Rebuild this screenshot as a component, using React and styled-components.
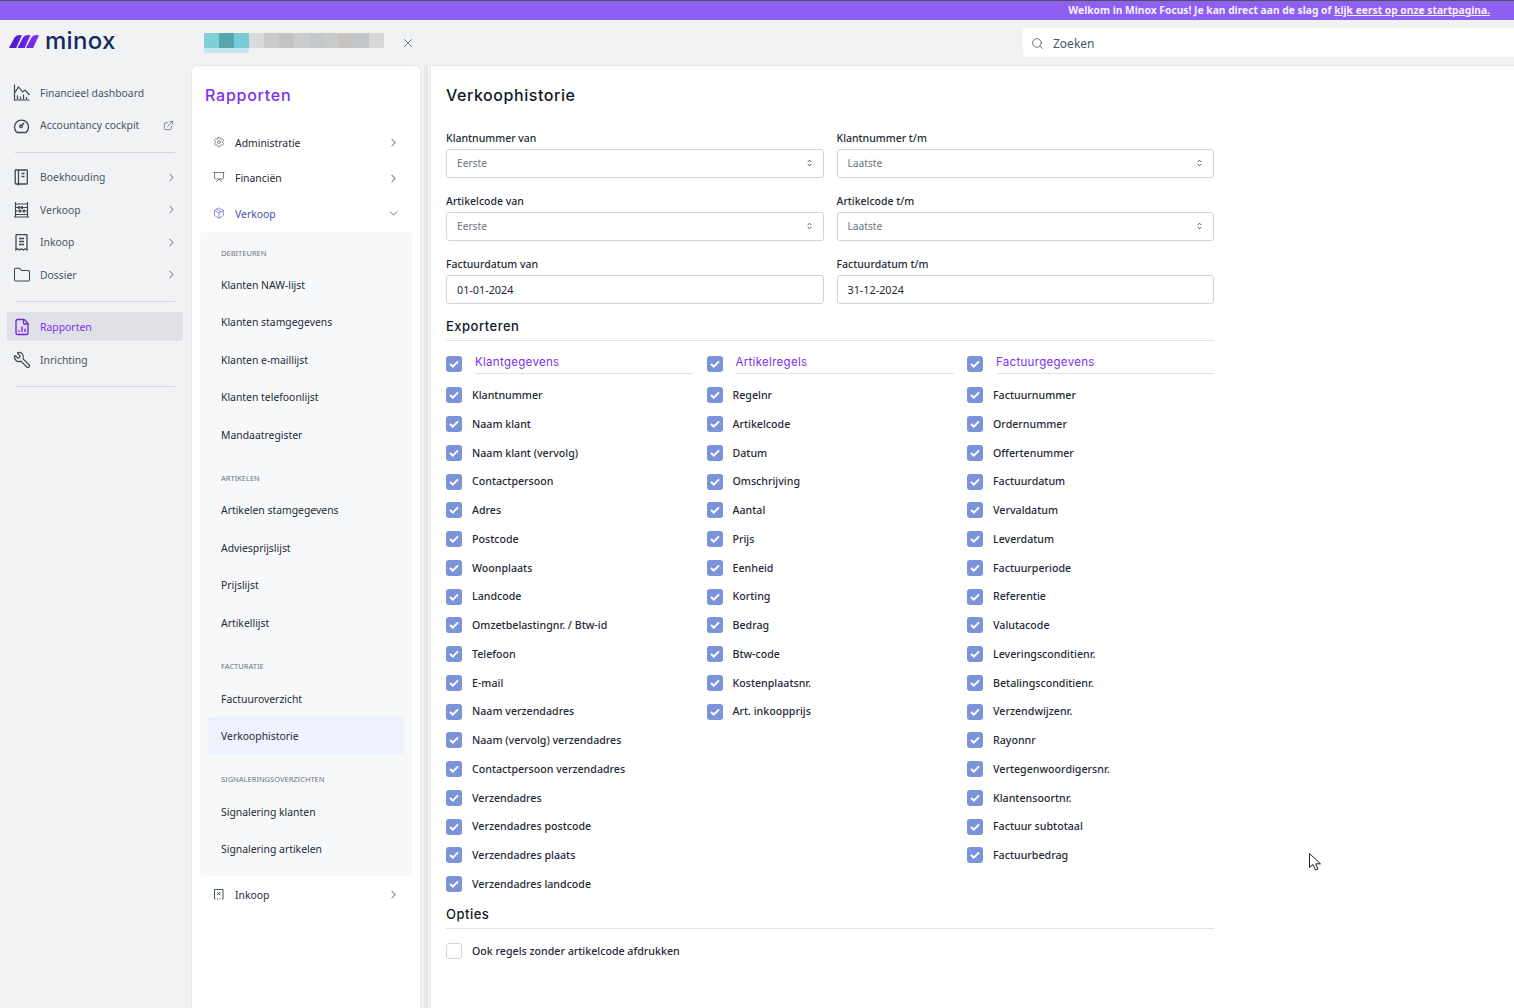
import React from "react";
import styled, { createGlobalStyle } from "styled-components";
import {
  ChevronDown,
  ChevronRight,
  ExternalLink,
  FileChartColumn,
  Folder,
  Package,
  Presentation,
  Search,
  Settings,
  Wrench,
  X,
} from "lucide-react";

const GlobalStyle = createGlobalStyle`
  html, body { margin: 0; padding: 0; background: #f1f2f4; }
  body { font-family: "Noto Sans", "Liberation Sans", sans-serif; font-size: 10.4px; color: #1f2937; }
  * { box-sizing: border-box; }
`;

const Page = styled.div`
  position: relative;
  display: flex;
  flex-direction: column;
  width: 1514px;
  height: 1008px;
  overflow: hidden;
`;

const Banner = styled.div`
  height: 20px;
  flex: none;
  padding-right: 24px;
  background: #8f5ff3;
  border-top: 1px solid #4f4f55;
  color: #f5f0fe;
  font-size: 10.28px;
  font-weight: 700;
  line-height: 18px;
  text-align: right;
  a { color: inherit; text-decoration: underline; }
`;

const Header = styled.header`
  display: flex;
  align-items: center;
  height: 45px;
  flex: none;
`;

const LogoArea = styled.div`
  display: flex;
  align-items: center;
  width: 204px;
  margin-bottom: 4px;
  padding-left: 9px;
  gap: 6px;
`;

const LogoText = styled.span`
  font-family: "Inter", sans-serif;
  font-size: 24px;
  font-weight: 500;
  line-height: 24px;
  letter-spacing: 0.3px;
  color: #142a5c;
`;

const Tenant = styled.div`
  display: flex;
  align-items: flex-start;
  height: 20px;
`;

const Pixel = styled.div`
  width: 15px;
  height: ${(p) => (p.$tall ? 20 : 15)}px;
  background: ${(p) =>
    p.$tall ? `linear-gradient(${p.$c} 15px, #c3ebef 15px)` : p.$c};
`;

const CloseBtn = styled.div`
  display: flex;
  margin-left: 17px;
  color: #4b5563;
`;

const SearchBox = styled.div`
  display: flex;
  align-items: center;
  gap: 9px;
  width: 491px;
  height: 29px;
  margin-left: auto;
  padding: 1px 0 0 8px;
  background: #fff;
  border-radius: 3px 0 0 3px;
  color: #4b5563;
  font-size: 12px;
`;

const Body = styled.div`
  display: flex;
  flex: 1;
  min-height: 0;
`;

const Sidebar = styled.nav`
  width: 191px;
  flex: none;
  padding: 11.6px 8px 0 7px;
`;

const SideItem = styled.div`
  display: flex;
  align-items: center;
  height: ${(p) => (p.$active ? 29 : 32.6)}px;
  margin: ${(p) => (p.$active ? "10.1px 0 2px" : "0")};
  padding: 0 5px 0 6px;
  border-radius: 3px;
  background: ${(p) => (p.$active ? "#dfe1e6" : "transparent")};
  color: ${(p) => (p.$active ? "#7c2ff0" : "#4b5563")};
`;

const SideIcon = styled.span`
  display: flex;
  width: 27px;
  flex: none;
  color: ${(p) => (p.$active ? "#6d28d9" : "#3f4753")};
`;

const SideLabel = styled.span`
  flex: 1;
`;

const ExternalMark = styled.span`
  display: flex;
  margin-right: 4px;
`;

const FlipX = styled.span`
  display: flex;
  transform: scaleX(-1);
`;

const SideRule = styled.hr`
  height: 1px;
  margin: 10px 8px 8px;
  border: 0;
  background: #d4d6db;
`;

const Panel = styled.aside`
  width: 230px;
  flex: none;
  padding: 0 8px;
  background: #fff;
  border: 1px solid #e5e7eb;
  border-bottom: 0;
  border-radius: 6px 6px 0 0;
`;

const PanelTitle = styled.h2`
  margin: 19px 0 20px 5px;
  font-family: "Inter", sans-serif;
  font-size: 16px;
  font-weight: 500;
  line-height: 20px;
  letter-spacing: 0.75px;
  color: #7c2ff0;
`;

const PanelItem = styled.div`
  display: flex;
  align-items: center;
  height: 35.5px;
  padding: 0 12px 0 13px;
  color: ${(p) => (p.$open ? "#3f51a8" : "#1f2937")};
`;

const PanelIcon = styled.span`
  display: flex;
  width: 22px;
  flex: none;
  margin-top: -2px;
  color: ${(p) => (p.$open ? "#5b6cc0" : "#4b5563")};
`;

const PanelLabel = styled.span`
  flex: 1;
`;

const SubPanel = styled.div`
  margin-bottom: 1.5px;
  padding: 8px;
  background: #f7f8fa;
  border-radius: 4px;
`;

const SubHeader = styled.div`
  height: 26.5px;
  margin-top: ${(p) => (p.$first ? 0 : 12)}px;
  padding-left: 13px;
  color: #6b7280;
  font-size: 7.5px;
  line-height: 27.5px;
  text-transform: uppercase;
`;

const SubItem = styled.div`
  height: 37.4px;
  padding-left: 13px;
  border-radius: 2px;
  background: ${(p) => (p.$active ? "#eef2fd" : "transparent")};
  color: #1f2937;
  line-height: 39px;
`;

const Strip = styled.div`
  width: 9px;
  flex: none;
  background: linear-gradient(90deg, #f1f2f4 3px, #e5e7eb 3px, #e5e7eb 7px, #f1f2f4 7px);
`;

const Main = styled.main`
  flex: 1;
  padding: 0 0 0 15px;
  background: #fff;
  border-top: 1px solid #e5e7eb;
  border-left: 1px solid #e5e7eb;
`;

const Form = styled.div`
  width: 768px;
`;

const Title = styled.h1`
  margin: 19px 0 24.7px;
  font-family: "Inter", sans-serif;
  font-size: 16px;
  font-weight: 500;
  line-height: 20px;
  letter-spacing: 0.55px;
  color: #111827;
`;

const Fields = styled.div`
  display: grid;
  grid-template-columns: 1fr 1fr;
  column-gap: 13px;
  row-gap: 15px;
`;

const Field = styled.div`
  display: flex;
  flex-direction: column;
  gap: 3px;
`;

const FieldLabel = styled.label`
  font-size: 10.5px;
  line-height: 16px;
  font-weight: 500;
  color: #1f2937;
`;

const Input = styled.div`
  display: flex;
  align-items: center;
  justify-content: space-between;
  height: 29px;
  padding: 0 11px 0 10px;
  background: #fff;
  border: 1px solid #d1d5db;
  border-radius: 3px;
  color: ${(p) => (p.$placeholder ? "#6b7280" : "#1f2937")};
  font-size: ${(p) => (p.$placeholder ? 10.2 : 10.8)}px;
`;

const SectionTitle = styled.h3`
  height: 24px;
  margin: ${(p) => p.$mt}px 0 0;
  border-bottom: 1px solid #e0e2e8;
  font-family: "Inter", sans-serif;
  font-size: 13px;
  font-weight: 450;
  line-height: 18px;
  letter-spacing: 0.5px;
  color: #111827;
`;

const Columns = styled.div`
  display: grid;
  grid-template-columns: repeat(3, 1fr);
  column-gap: 13.5px;
  margin-top: 11px;
`;

const ColumnHead = styled.div`
  display: flex;
  align-items: center;
  height: 22px;
  margin-bottom: 7px;
  & > span:first-child { margin-top: 2px; }
`;

const ColumnTitle = styled.div`
  flex: 1;
  height: 22px;
  margin-left: 13px;
  border-bottom: 1px solid #e0e2e8;
  font-family: "Inter", sans-serif;
  font-size: 11.5px;
  line-height: 20px;
  letter-spacing: 0.3px;
  color: #7c2ff0;
`;

const Row = styled.div`
  display: flex;
  align-items: center;
  gap: 10px;
  height: 28.75px;
  font-size: 10.65px;
  font-weight: 500;
  color: #1f2937;
`;

const RowText = styled.span`
  margin-bottom: 0.5px;
`;

const OptionRow = styled(Row)`
  margin-top: 7px;
`;

const Box = styled.span`
  display: flex;
  align-items: center;
  justify-content: center;
  width: 16px;
  height: 16px;
  flex: none;
  background: ${(p) => (p.$checked ? "#7b93d8" : "#fff")};
  border: ${(p) => (p.$checked ? "0" : "1px solid #d1d5db")};
  border-radius: 3px;
`;

const Cursor = styled.svg`
  position: absolute;
  left: 1308px;
  top: 852px;
`;

const Check = ({ checked = true }) => (
  <Box $checked={checked}>
    {checked && (
      <svg width="10" height="8" viewBox="0 0 10 8" fill="none">
        <path d="M1 4l2.800 2.600L9 1.400" stroke="#fff" strokeWidth="2" />
      </svg>
    )}
  </Box>
);

const DashboardIcon = () => (
  <svg width="17" height="17" viewBox="0 0 17 17" fill="none" stroke="currentColor" strokeWidth="1.2">
    <path d="M1.500 0.500v15.500H16.500" />
    <path d="M1.500 9l4-6 4 5 2.500-2 4.500 5" />
    <path d="M4.500 15.500v-4M7.500 15.500v-3M10.500 15.500v-5M13.500 15.500v-2.500" />
  </svg>
);

const GaugeIcon = () => (
  <svg width="17" height="17" viewBox="0 0 17 17" fill="none" stroke="currentColor" strokeWidth="1.4">
    <path d="M4 15.500h9a7 7 0 1 0-9 0z" />
    <circle cx="8" cy="9.300" r="1.300" />
    <path d="M9 8.300l2-2.300" />
  </svg>
);

const BookIcon = () => (
  <svg width="17" height="17" viewBox="0 0 17 17" fill="none" stroke="currentColor" strokeWidth="1.300">
    <path d="M3 1h10.500a.8.8 0 0 1 .8.800v12.400a.8.8 0 0 1-.8.800H3a.8.8 0 0 1-.8-.8V1.800a.8.8 0 0 1 .8-.8z" />
    <path d="M5.500 1v15.500M8.500 4.500h3M8.500 7.500h3" />
  </svg>
);

const AbacusIcon = () => (
  <svg width="17" height="17" viewBox="0 0 17 17" fill="none" stroke="currentColor" strokeWidth="1.2">
    <path d="M1 16h15M2.500 1v15M14.500 1v15M2.500 3h12M2.500 13.500h12M2.500 6.500h12M2.500 10h12" />
    <path d="M6 5v3M9 5v3M7 8.500v3M11 8.500v3" strokeWidth="1.800" />
  </svg>
);

const ReceiptIcon = () => (
  <svg width="17" height="17" viewBox="0 0 17 17" fill="none" stroke="currentColor" strokeWidth="1.300">
    <path d="M3 1.500a1 1 0 0 1 1-1h9a1 1 0 0 1 1 1V16l-1.800-1.200L10.300 16l-1.800-1.200L6.700 16l-1.900-1.200L3 16z" />
    <path d="M6 4.500h5M6 7.500h5M6 10.500h5" />
  </svg>
);

const VoidReceiptIcon = () => (
  <svg width="12" height="12" viewBox="0 0 12 12" fill="none" stroke="currentColor" strokeWidth="1">
    <path d="M1.500 11V1.500h8.500V11" />
    <path d="M1.500 11h1M4 11h1M6.500 11h1M9 11h1" />
    <path d="M4.200 4l3 3.200M7.200 4l-3 3.200" />
  </svg>
);

const LogoMark = () => (
  <svg width="30" height="14" viewBox="0 0 30 14">
    <defs>
      <linearGradient id="logoGrad" x1="0" y1="0" x2="1" y2="0">
        <stop offset="0" stopColor="#4c12c9" />
        <stop offset="1" stopColor="#8035f2" />
      </linearGradient>
    </defs>
    <path
      fill="url(#logoGrad)"
      d="M0 14L5.500 3.500Q7 1 10 1L13 1.200L7.200 14ZM8.500 14L14 3.500Q15.500 1 18.500 1L21.500 1.200L15.700 14ZM17 14L22.500 3.500Q24 1 27 1L30 1.200L24.200 14Z"
    />
  </svg>
);

const pixels = ["#83cfd8", "#58a6ad", "#76cbd7", "#d9dadc", "#c9cacc", "#c4c3c2", "#cbcccd", "#c5c8cb", "#c9caca", "#c8c3bf", "#c3c6c8", "#d6d7d8"];

const mainNav = [
  [
    { label: "Financieel dashboard", icon: <DashboardIcon /> },
    { label: "Accountancy cockpit", icon: <GaugeIcon />, external: true },
  ],
  [
    { label: "Boekhouding", icon: <BookIcon />, more: true },
    { label: "Verkoop", icon: <AbacusIcon />, more: true },
    { label: "Inkoop", icon: <ReceiptIcon />, more: true },
    { label: "Dossier", icon: <Folder size={18} strokeWidth={1.4} />, more: true },
  ],
  [
    { label: "Rapporten", icon: <FileChartColumn size={18} strokeWidth={1.8} />, active: true },
    { label: "Inrichting", icon: <FlipX><Wrench size={18} strokeWidth={1.6} /></FlipX> },
  ],
];

const groups = [
  { title: "Debiteuren", items: ["Klanten NAW-lijst", "Klanten stamgegevens", "Klanten e-maillijst", "Klanten telefoonlijst", "Mandaatregister"] },
  { title: "Artikelen", items: ["Artikelen stamgegevens", "Adviesprijslijst", "Prijslijst", "Artikellijst"] },
  { title: "Facturatie", items: ["Factuuroverzicht", "Verkoophistorie"] },
  { title: "Signaleringsoverzichten", items: ["Signalering klanten", "Signalering artikelen"] },
];

const fields = [
  { label: "Klantnummer van", value: "Eerste", select: true },
  { label: "Klantnummer t/m", value: "Laatste", select: true },
  { label: "Artikelcode van", value: "Eerste", select: true },
  { label: "Artikelcode t/m", value: "Laatste", select: true },
  { label: "Factuurdatum van", value: "01-01-2024" },
  { label: "Factuurdatum t/m", value: "31-12-2024" },
];

const exportColumns = [
  {
    title: "Klantgegevens",
    rows: ["Klantnummer", "Naam klant", "Naam klant (vervolg)", "Contactpersoon", "Adres", "Postcode", "Woonplaats", "Landcode", "Omzetbelastingnr. / Btw-id", "Telefoon", "E-mail", "Naam verzendadres", "Naam (vervolg) verzendadres", "Contactpersoon verzendadres", "Verzendadres", "Verzendadres postcode", "Verzendadres plaats", "Verzendadres landcode"],
  },
  {
    title: "Artikelregels",
    rows: ["Regelnr", "Artikelcode", "Datum", "Omschrijving", "Aantal", "Prijs", "Eenheid", "Korting", "Bedrag", "Btw-code", "Kostenplaatsnr.", "Art. inkoopprijs"],
  },
  {
    title: "Factuurgegevens",
    rows: ["Factuurnummer", "Ordernummer", "Offertenummer", "Factuurdatum", "Vervaldatum", "Leverdatum", "Factuurperiode", "Referentie", "Valutacode", "Leveringsconditienr.", "Betalingsconditienr.", "Verzendwijzenr.", "Rayonnr", "Vertegenwoordigersnr.", "Klantensoortnr.", "Factuur subtotaal", "Factuurbedrag"],
  },
];

const SelectArrows = () => (
  <svg width="5" height="8" viewBox="0 0 5 8" fill="none" stroke="#4b5563" strokeWidth="1">
    <path d="M0.700 3L2.500 1.200L4.300 3M0.700 5L2.500 6.800L4.300 5" />
  </svg>
);

export default function App() {
  return (
    <Page>
      <GlobalStyle />
      <Banner>
        Welkom in Minox Focus! Je kan direct aan de slag of <a href="#start">kijk eerst op onze startpagina.</a>
      </Banner>
      <Header>
        <LogoArea>
          <LogoMark />
          <LogoText>minox</LogoText>
        </LogoArea>
        <Tenant>
          {pixels.map((c, i) => (
            <Pixel key={i} $c={c} $tall={i < 3} />
          ))}
        </Tenant>
        <CloseBtn>
          <X size={14} strokeWidth={1.4} />
        </CloseBtn>
        <SearchBox>
          <Search size={13} strokeWidth={1.5} />
          Zoeken
        </SearchBox>
      </Header>
      <Body>
        <Sidebar>
          {mainNav.map((section, i) => (
            <React.Fragment key={i}>
              {section.map((item) => (
                <SideItem key={item.label} $active={item.active}>
                  <SideIcon $active={item.active}>{item.icon}</SideIcon>
                  <SideLabel>{item.label}</SideLabel>
                  {item.more && <ChevronRight size={13} strokeWidth={1.6} />}
                  {item.external && (
                    <ExternalMark><ExternalLink size={11} strokeWidth={1.4} /></ExternalMark>
                  )}
                </SideItem>
              ))}
              <SideRule />
            </React.Fragment>
          ))}
        </Sidebar>
        <Panel>
          <PanelTitle>Rapporten</PanelTitle>
          <PanelItem>
            <PanelIcon><Settings size={12} strokeWidth={1.3} /></PanelIcon>
            <PanelLabel>Administratie</PanelLabel>
            <ChevronRight size={13} strokeWidth={1.5} />
          </PanelItem>
          <PanelItem>
            <PanelIcon><Presentation size={12} strokeWidth={1.5} /></PanelIcon>
            <PanelLabel>Financiën</PanelLabel>
            <ChevronRight size={13} strokeWidth={1.5} />
          </PanelItem>
          <PanelItem $open>
            <PanelIcon $open><Package size={12} strokeWidth={1.4} /></PanelIcon>
            <PanelLabel>Verkoop</PanelLabel>
            <ChevronDown size={13} strokeWidth={1.5} />
          </PanelItem>
          <SubPanel>
            {groups.map((group, i) => (
              <React.Fragment key={group.title}>
                <SubHeader $first={i === 0}>{group.title}</SubHeader>
                {group.items.map((name) => (
                  <SubItem key={name} $active={name === "Verkoophistorie"}>{name}</SubItem>
                ))}
              </React.Fragment>
            ))}
          </SubPanel>
          <PanelItem>
            <PanelIcon><VoidReceiptIcon /></PanelIcon>
            <PanelLabel>Inkoop</PanelLabel>
            <ChevronRight size={13} strokeWidth={1.5} />
          </PanelItem>
        </Panel>
        <Strip />
        <Main>
          <Form>
            <Title>Verkoophistorie</Title>
            <Fields>
              {fields.map((f) => (
                <Field key={f.label}>
                  <FieldLabel>{f.label}</FieldLabel>
                  <Input $placeholder={f.select}>
                    {f.value}
                    {f.select && <SelectArrows />}
                  </Input>
                </Field>
              ))}
            </Fields>
            <SectionTitle $mt={13.3}>Exporteren</SectionTitle>
            <Columns>
              {exportColumns.map((col) => (
                <div key={col.title}>
                  <ColumnHead>
                    <Check />
                    <ColumnTitle>{col.title}</ColumnTitle>
                  </ColumnHead>
                  {col.rows.map((name) => (
                    <Row key={name}>
                      <Check />
                      <RowText>{name}</RowText>
                    </Row>
                  ))}
                </div>
              ))}
            </Columns>
            <SectionTitle $mt={7}>Opties</SectionTitle>
            <OptionRow>
              <Check checked={false} />
              <RowText>Ook regels zonder artikelcode afdrukken</RowText>
            </OptionRow>
          </Form>
        </Main>
      </Body>
      <Cursor width="15" height="20" viewBox="0 0 15 20">
        <path d="M1.500 1.500V15.500L5 12.500L7.500 18L10 17L7.800 11.800H12.500Z" fill="#fff" stroke="#222" strokeWidth="1" />
      </Cursor>
    </Page>
  );
}
